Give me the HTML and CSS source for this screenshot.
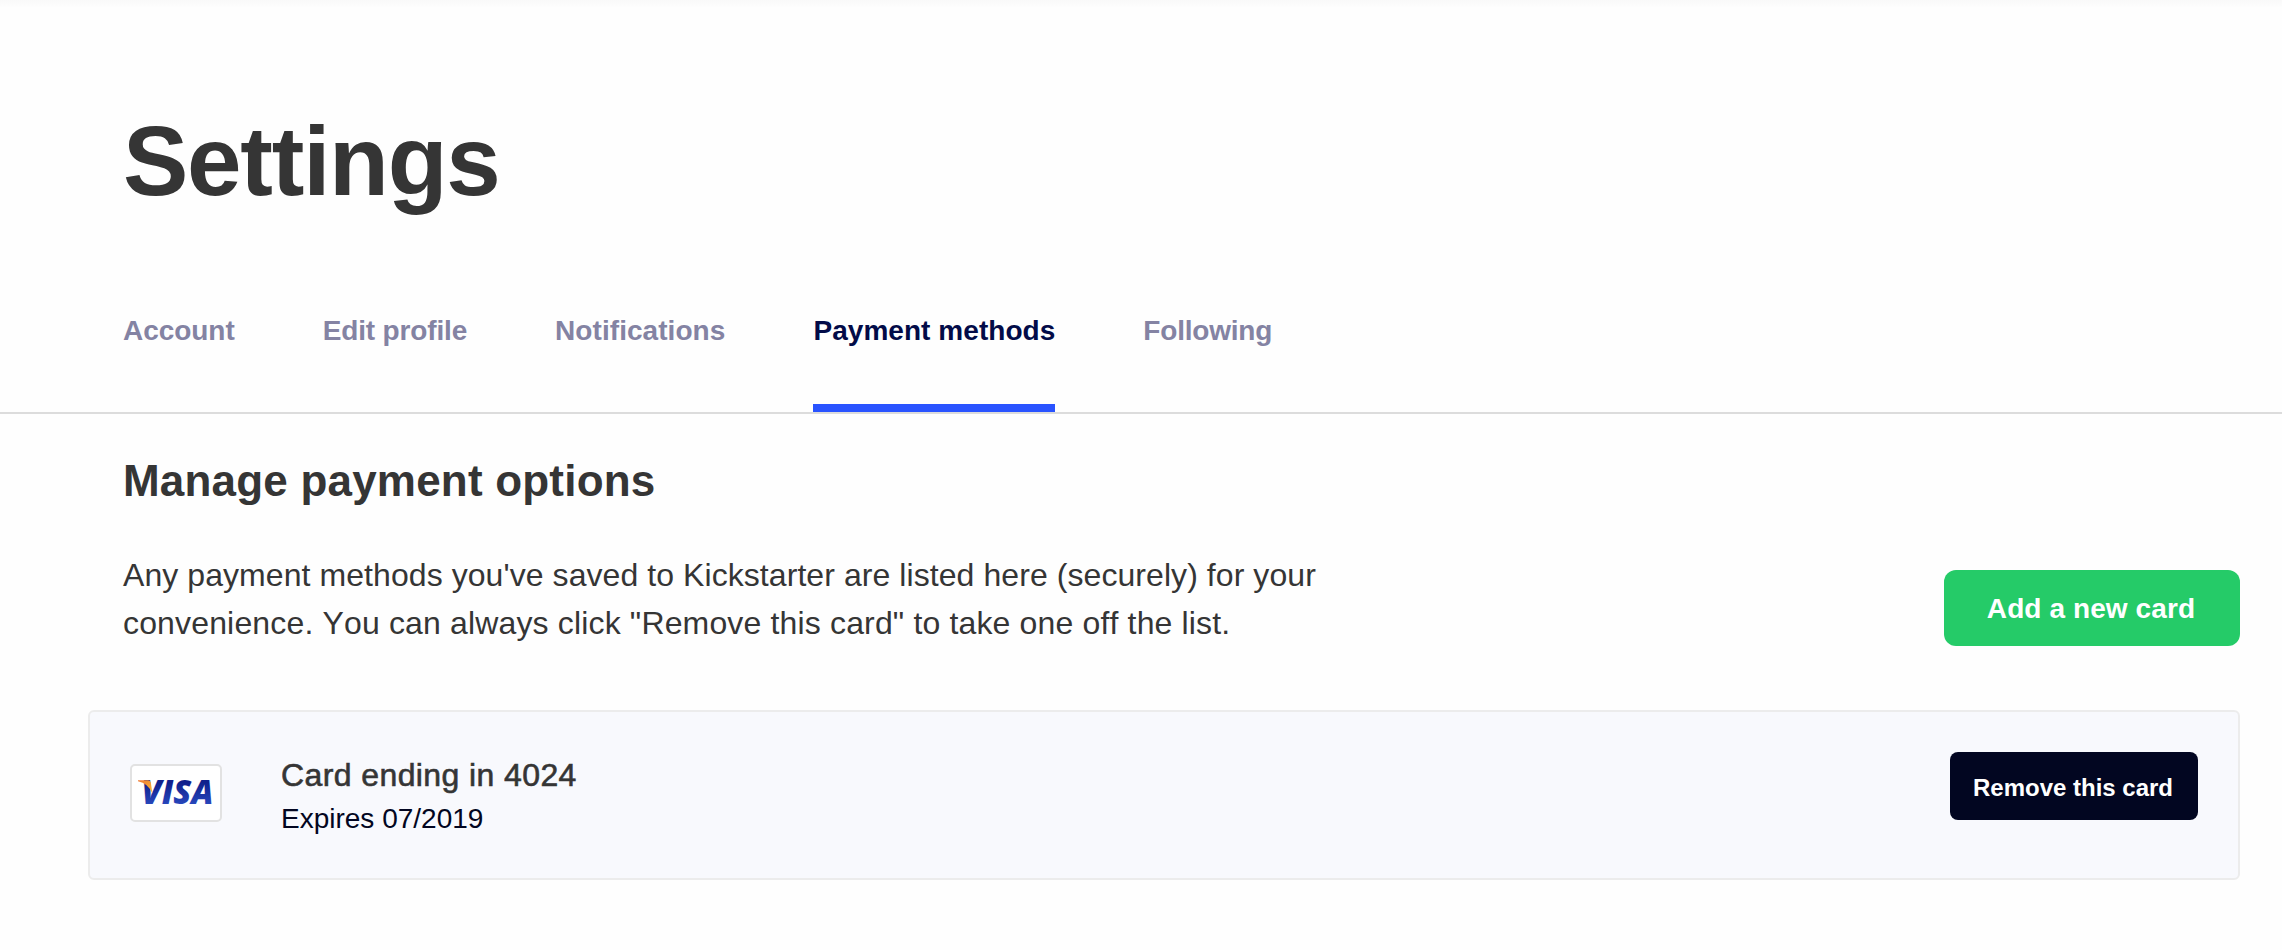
FILE: index.html
```html
<!DOCTYPE html>
<html lang="en">
<head>
    <meta charset="UTF-8">
    <meta name="viewport" content="width=device-width, initial-scale=1.0">
    <title>Settings</title>
    <link rel="stylesheet" href="styles.css">
</head>
<body>
    <header class="header">
        <h1>Settings</h1>
        <nav class="tabs">
            <a href="#" class="tab">Account</a>
            <a href="#" class="tab edit">Edit profile</a>
            <a href="#" class="tab notifications">Notifications</a>
            <a href="#" class="tab active">Payment methods</a>
            <a href="#" class="tab following">Following</a>
        </nav>
    </header>
    <main class="content">
        <h2>Manage payment options</h2>
        <div class="intro">
            <p>
                <span class="line-one">Any payment methods you've saved to Kickstarter are listed here (securely) for your</span><br>
                <span class="line-two">convenience. You can always click "Remove this card" to take one off the list.</span>
            </p>
            <button type="button" class="btn add-card">Add a new card</button>
        </div>
        <div class="card">
            <svg class="card-logo" width="92" height="58" viewBox="0 0 92 58">
                <defs>
                    <linearGradient id="visaBlue" x1="0" y1="0" x2="0" y2="1">
                        <stop offset="0.3" stop-color="#10208c"/>
                        <stop offset="0.8" stop-color="#2848bd"/>
                    </linearGradient>
                    <linearGradient id="visaGold" x1="0" y1="0" x2="0.6" y2="1">
                        <stop offset="0" stop-color="#f07a35"/>
                        <stop offset="1" stop-color="#f9b233"/>
                    </linearGradient>
                </defs>
                <rect x="1" y="1" width="90" height="56" rx="4" fill="#fff" stroke="#e2e2e2" stroke-width="2"/>
                <text class="visa" x="11.5" y="40" textLength="72" lengthAdjust="spacingAndGlyphs" fill="url(#visaBlue)">VISA</text>
                <path d="M8 16.2H18Q20.4 16.2 20.8 18.5L22.4 29.5Q18 19 8 17.2Z" fill="url(#visaGold)"/>
            </svg>
            <div class="card-info">
                <div class="card-number">Card ending in 4024</div>
                <div class="card-expiry">Expires 07/2019</div>
            </div>
            <button type="button" class="btn remove-card">Remove this card</button>
        </div>
    </main>
</body>
</html>
```
FILE: styles.css
```css
* {
    box-sizing: border-box;
}
body {
    margin: 0;
    font-family: "Liberation Sans", Arial, sans-serif;
    font-kerning: none;
    background: linear-gradient(#f9f9f9, #fefefe 8px) no-repeat #fefefe;
    color: #353535;
}
.header {
    height: 414px;
    padding-left: 123px;
    border-bottom: 2px solid #dcdcdc;
}
h1 {
    margin: 0;
    padding-top: 106px;
    font-size: 98px;
    line-height: 110px;
    letter-spacing: -1.25px;
}
.tabs {
    display: flex;
    gap: 88px;
    height: 196px;
}
.tab {
    padding-top: 99px;
    font-size: 28px;
    line-height: 32px;
    font-weight: bold;
    color: #8483a3;
    letter-spacing: -0.05px;
    text-decoration: none;
    white-space: nowrap;
}
.tab.edit {
    letter-spacing: -0.15px;
}
.tab.notifications {
    letter-spacing: 0.06px;
}
.tab.following {
    letter-spacing: -0.2px;
}
.tab.active {
    color: #020b48;
    letter-spacing: 0.05px;
    border-bottom: 8px solid #2953ff;
}
.content {
    padding: 42px 42px 0 88px;
}
h2 {
    margin: 0 0 0 35px;
    font-size: 44px;
    line-height: 50px;
    letter-spacing: 0.2px;
}
.intro {
    display: flex;
    justify-content: space-between;
    align-items: flex-start;
    height: 204px;
    padding-left: 35px;
}
.intro p {
    margin: 45px 0 0;
    font-size: 32px;
    line-height: 48px;
    white-space: nowrap;
}
.line-one {
    letter-spacing: 0.07px;
}
.line-two {
    letter-spacing: 0.155px;
}
.btn {
    border: none;
    color: #fff;
    font-family: inherit;
    font-weight: bold;
    white-space: nowrap;
    cursor: pointer;
}
.add-card {
    width: 296px;
    height: 76px;
    padding: 2px 2px 0 0;
    margin-top: 64px;
    border-radius: 12px;
    background-color: #25cb68;
    font-size: 28px;
    letter-spacing: 0.1px;
}
.card {
    display: flex;
    align-items: flex-start;
    height: 170px;
    padding: 40px 40px 0;
    border: 2px solid #ececec;
    border-radius: 6px;
    background-color: #f8f9fd;
}
.card-logo {
    margin-top: 12px;
}
.visa {
    font-family: "Open Sans", sans-serif;
    font-size: 33px;
    font-style: italic;
    font-weight: 800;
}
.card-info {
    margin: 3px auto 0 59px;
}
.card-number {
    font-size: 32px;
    line-height: 40px;
    letter-spacing: 0.4px;
    -webkit-text-stroke: 0.6px #353535;
}
.card-expiry {
    padding-top: 6px;
    font-size: 28px;
    line-height: 36px;
    color: #020621;
}
.remove-card {
    width: 248px;
    height: 68px;
    padding: 3px 2px 0 0;
    border-radius: 8px;
    background-color: #020621;
    font-size: 24px;
}
```
